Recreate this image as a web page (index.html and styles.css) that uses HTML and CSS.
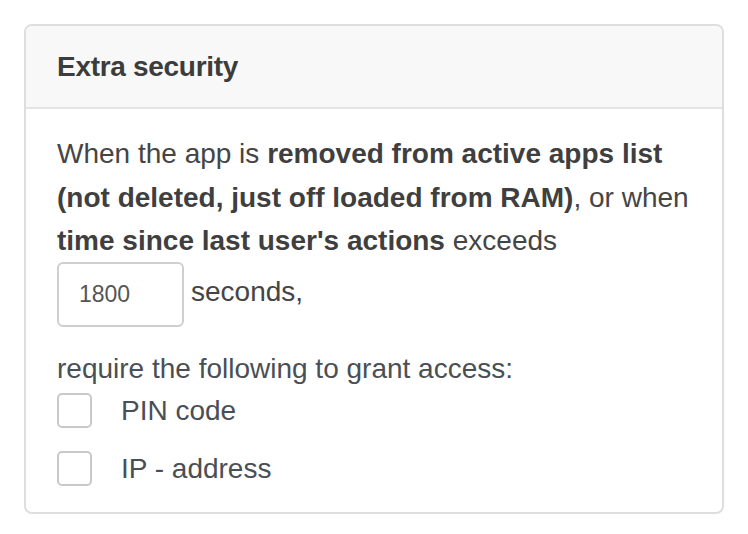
FILE: index.html
```html
<!DOCTYPE html>
<html>
<head>
<meta charset="utf-8">
<link rel="stylesheet" href="styles.css">
</head>
<body>
<div class="panel">
  <div class="panel-heading"><h3 class="panel-title">Extra security</h3></div>
  <div class="panel-body">
    <p class="desc">When the app is <b>removed from active apps list (not deleted, just off loaded from RAM)</b>, or when <b>time since last user's actions</b> exceeds</p>
    <div class="timeout-row">
      <input class="seconds-input" type="text" value="1800">
      <span class="seconds-label">seconds,</span>
    </div>
    <p class="require">require the following to grant access:</p>
    <label class="check"><span class="box"></span><span class="check-text">PIN code</span></label>
    <label class="check"><span class="box"></span><span class="check-text">IP - address</span></label>
  </div>
</div>
</body>
</html>
```
FILE: styles.css
```css
html, body {
  margin: 0;
  padding: 0;
  background: #fff;
}
body {
  padding: 24px 24px 0 24px;
  font-family: "Liberation Sans", Arial, sans-serif;
  color: #444;
}
.panel {
  width: 700px;
  box-sizing: border-box;
  border: 2px solid #dedede;
  border-radius: 8px;
  overflow: hidden;
}
.panel-heading {
  background: #f8f8f8;
  border-bottom: 2px solid #e4e4e4;
  height: 83px;
  box-sizing: border-box;
  padding: 0 31px;
  display: flex;
  align-items: center;
}
.panel-title {
  margin: 0;
  font-size: 28px;
  font-weight: bold;
  color: #3c3c3c;
  letter-spacing: -0.3px;
}
.panel-body {
  padding: 23px 31px 25px 31px;
}
.desc {
  margin: 0;
  font-size: 28px;
  line-height: 43.5px;
  color: #454545;
}
.desc b {
  color: #3f3f3f;
}
.timeout-row {
  display: flex;
  align-items: center;
  gap: 7px;
  margin-top: -1px;
}
.seconds-input {
  width: 127px;
  height: 65px;
  box-sizing: border-box;
  border: 2px solid #cfcfcf;
  border-radius: 6px;
  padding: 0 20px;
  font-family: "Liberation Sans", Arial, sans-serif;
  font-size: 23px;
  color: #555;
  outline: none;
}
.seconds-label {
  font-size: 28px;
  color: #454545;
  margin-bottom: 4px;
}
.require {
  margin: 22px 0 0 0;
  font-size: 28px;
  line-height: 40px;
  color: #4a4f55;
}
.check {
  display: flex;
  align-items: center;
  gap: 29px;
  height: 36px;
  margin-top: 4px;
}
.check + .check {
  margin-top: 22px;
}
.box {
  width: 35px;
  height: 35px;
  box-sizing: border-box;
  border: 2px solid #c9c9c9;
  border-radius: 5px;
  background: #fff;
}
.check-text {
  font-size: 28px;
  color: #4a4f55;
}
```
